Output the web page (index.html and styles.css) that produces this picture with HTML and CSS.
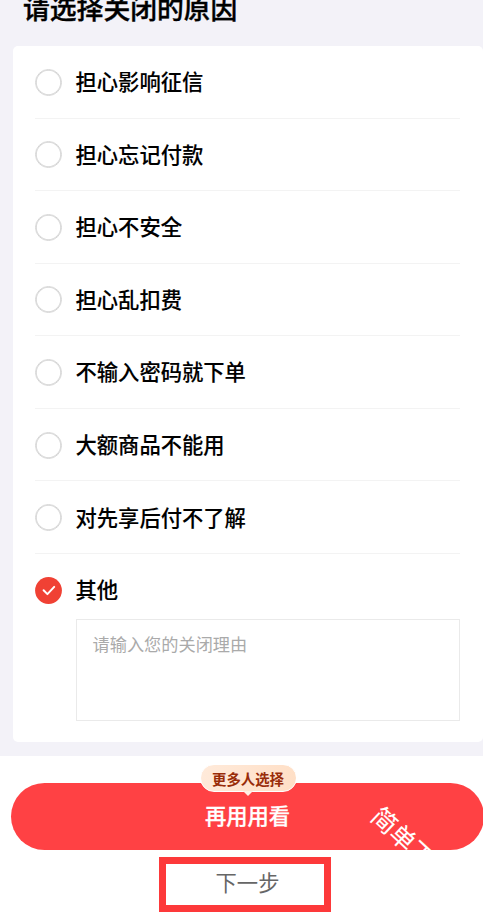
FILE: index.html
```html
<!DOCTYPE html>
<html lang="zh-CN">
<head>
<meta charset="utf-8">
<title>请选择关闭的原因</title>
<link rel="stylesheet" href="styles.css">
</head>
<body>
<main class="reasons">
  <h1 class="title">请选择关闭的原因</h1>
  <section class="card">
    <div class="row"><span class="radio"></span><span class="label">担心影响征信</span></div>
    <div class="row"><span class="radio"></span><span class="label">担心忘记付款</span></div>
    <div class="row"><span class="radio"></span><span class="label">担心不安全</span></div>
    <div class="row"><span class="radio"></span><span class="label">担心乱扣费</span></div>
    <div class="row"><span class="radio"></span><span class="label">不输入密码就下单</span></div>
    <div class="row"><span class="radio"></span><span class="label">大额商品不能用</span></div>
    <div class="row"><span class="radio"></span><span class="label">对先享后付不了解</span></div>
    <div class="row row-last">
      <svg class="checked" viewBox="0 0 27 27"><circle cx="13.5" cy="13.5" r="13.4"/><path d="M8.6 13.3l3.8 3.8 6.8-7.2"/></svg>
      <span class="label">其他</span>
    </div>
    <div class="reason-box">请输入您的关闭理由</div>
  </section>
</main>
<footer class="footer">
  <div class="primary">
    <span class="primary-text">再用用看</span>
    <div class="clip"><span class="slogan">简单下</span></div>
    <span class="badge">更多人选择</span>
  </div>
  <div class="next">下一步</div>
</footer>
</body>
</html>
```
FILE: styles.css
```css
* { box-sizing: border-box; }
body {
  margin: 0;
  height: 913px;
  overflow: hidden;
  background: #fff;
  color: #000;
  font-family: "Noto Sans CJK SC", sans-serif;
}
.reasons {
  height: 756px;
  padding-left: 13px;
  background: #f3f2f8;
}
.title {
  margin: 0;
  height: 46px;
  padding-left: 10px;
  font-size: 26.8px;
  line-height: 16px;
  font-weight: 500;
  -webkit-text-stroke: 0.4px #000;
  white-space: nowrap;
}
.card {
  height: 696px;
  padding: 0 22px;
  border-radius: 5px;
  background: #fff;
}
.row {
  display: flex;
  align-items: center;
  height: 72.55px;
  margin-right: 1px;
  padding-top: 1px;
  border-bottom: 1px solid #f3f3f3;
}
.row-last { height: 65px; border: 0; align-items: flex-start; padding-top: 23px; }
.radio {
  width: 27px;
  height: 27px;
  border: 1px solid #d6d6d6;
  border-radius: 50%;
  box-shadow: inset 0 0 0 0.8px #d6d6d6;
}
.checked { width: 27px; height: 27px; fill: #f04134; }
.checked path { fill: none; stroke: #fff; stroke-width: 2; stroke-linecap: round; stroke-linejoin: round; }
.label {
  margin-left: 13.5px;
  padding-bottom: 2px;
  font-size: 21.3px;
  line-height: 24px;
  font-weight: 500;
  -webkit-text-stroke: 0.1px #000;
}
.reason-box {
  height: 102px;
  margin: 0 1px 0 40.5px;
  padding: 11px 16px;
  border: 1px solid #eaeaea;
  color: #aaa;
  font-size: 17.2px;
  line-height: 26px;
}
.footer { padding-top: 27px; }
.primary {
  position: relative;
  width: 473px;
  height: 67px;
  margin-left: 11px;
  border-radius: 34px;
  background: #ff4144;
  color: #fff;
  text-align: center;
}
.primary-text {
  display: block;
  font-size: 21.3px;
  line-height: 63px;
  font-weight: 500;
  -webkit-text-stroke: 0.3px #fff;
}
.badge {
  position: absolute;
  top: -19px;
  left: 189px;
  width: 97px;
  height: 28px;
  padding-right: 1px;
  border: 1px solid #fff;
  border-radius: 14px;
  background: linear-gradient(100deg, #ffeada, #ffdfc6);
  color: #992c09;
  font-size: 14.4px;
  line-height: 27px;
  font-weight: 700;
}
.badge::after {
  content: "";
  position: absolute;
  left: 42px;
  top: 26px;
  border: 5px solid transparent;
  border-top-color: #fff0e6;
  border-bottom: 0;
}
.clip { position: absolute; inset: 0; overflow: hidden; border-radius: 34px; }
.slogan {
  position: absolute;
  left: 362px;
  top: 24px;
  font-size: 25px;
  line-height: 25px;
  white-space: nowrap;
  -webkit-text-stroke: 0.1px #fff;
  transform-origin: 12.5px 12.5px;
  transform: rotate(43deg);
}
.next {
  width: 172px;
  height: 55px;
  margin: 7px 0 0 159px;
  padding-left: 5px;
  border: 7px solid #fd393a;
  color: #666;
  font-size: 21.3px;
  line-height: 36px;
  text-align: center;
}
```
